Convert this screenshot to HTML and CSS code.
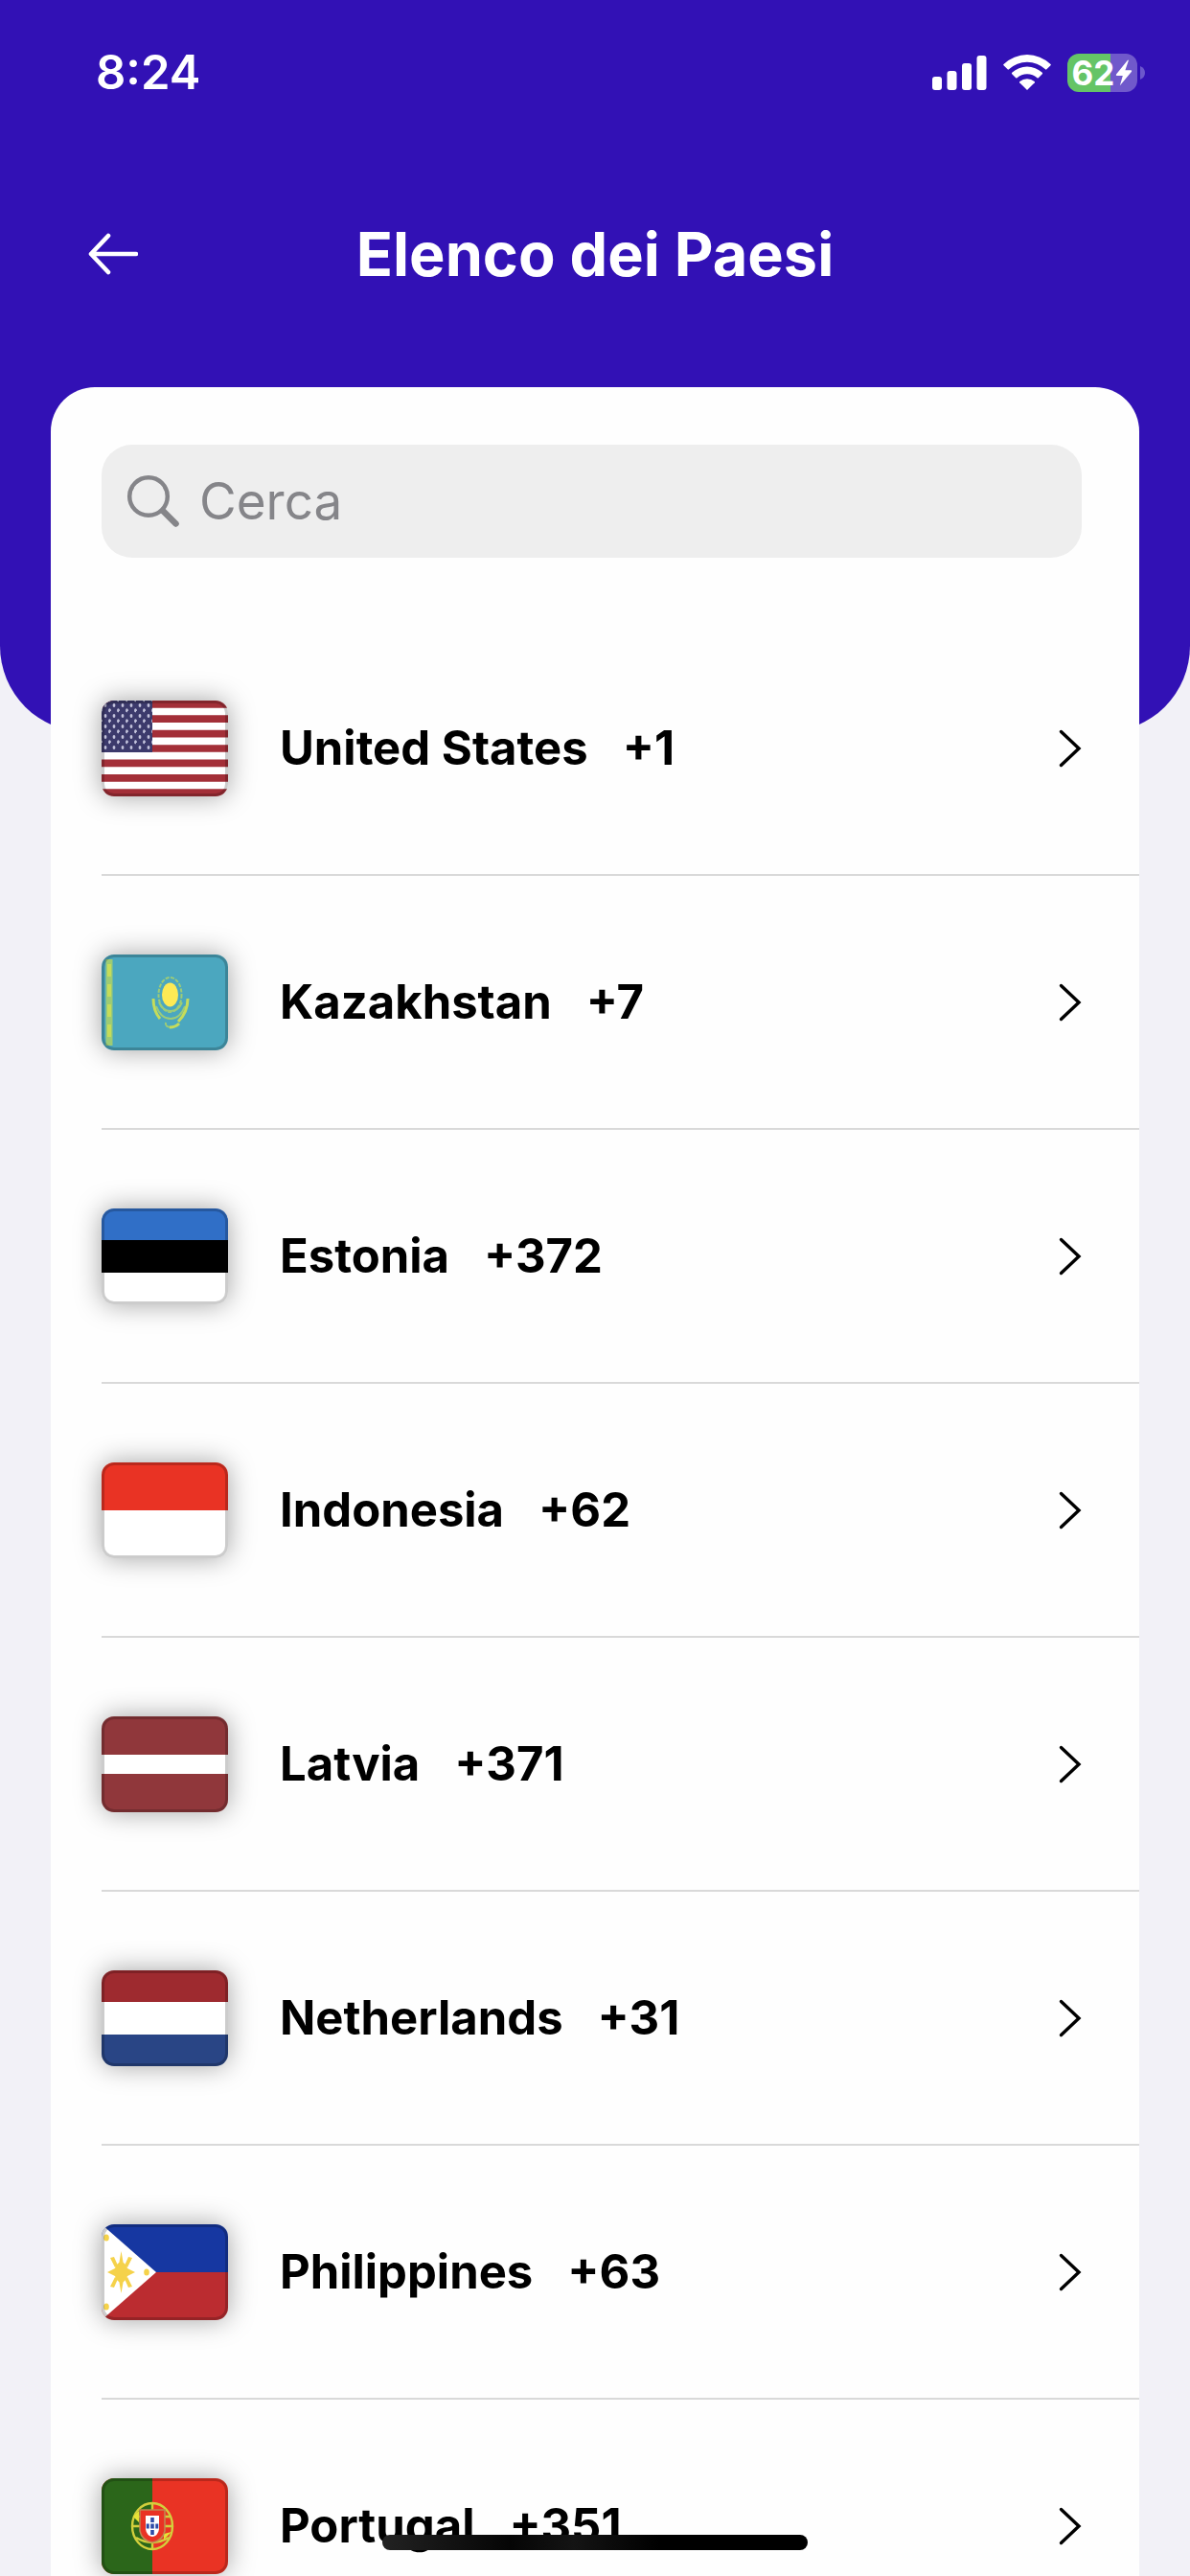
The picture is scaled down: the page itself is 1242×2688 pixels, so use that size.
FILE: index.html
```html
<!DOCTYPE html>
<html lang="it">
<head>
<meta charset="utf-8">
<meta name="viewport" content="width=device-width, initial-scale=1">
<title>Elenco dei Paesi</title>
<link rel="stylesheet" href="styles.css">
</head>
<body>
<svg width="0" height="0" class="defs" aria-hidden="true">
  <defs>
    <pattern id="stars" width="9" height="11" patternUnits="userSpaceOnUse">
      <ellipse cx="4" cy="5" rx="1.4" ry="2" fill="#c3c3dc"/>
      <ellipse cx="8.5" cy="10.3" rx="1.4" ry="2" fill="#c3c3dc"/>
      <ellipse cx="-.5" cy="10.3" rx="1.4" ry="2" fill="#c3c3dc"/>
      <ellipse cx="8.5" cy="-.7" rx="1.4" ry="2" fill="#c3c3dc"/>
    </pattern>
    <symbol id="chevron" viewBox="0 0 24 40">
      <path d="M2.500 2.500 21 20 2.500 37.500" fill="none" stroke="#000" stroke-width="3.400" stroke-linecap="round" stroke-linejoin="miter"/>
    </symbol>
  </defs>
</svg>
<div class="app">
  <header class="top">
    <div class="status">
      <time class="clock">8:24</time>
      <div class="indicators">
        <svg class="signal" viewBox="0 0 57 40" aria-hidden="true">
          <g fill="#fff"><rect y="24" width="10" height="14" rx="3"/><rect x="15.500" y="18" width="10" height="20" rx="3"/><rect x="31" y="10" width="10" height="28" rx="3"/><rect x="46.500" y="2" width="10" height="36" rx="3"/></g>
        </svg>
        <svg class="wifi" viewBox="0 0 50 40" aria-hidden="true">
          <g fill="#fff"><path d="M25 38 17.200 30.200A1 1 0 0 1 17.300 29 12.500 12.500 0 0 1 32.700 29 1 1 0 0 1 32.800 30.200Z"/><path d="M9.200 21.200A1 1 0 0 1 9.200 19.800 23 23 0 0 1 40.800 19.800 1 1 0 0 1 40.800 21.200L36.800 25.200A1 1 0 0 1 35.500 25.200 15.800 15.800 0 0 0 14.500 25.200 1 1 0 0 1 13.200 25.200Z"/><path d="M.5 12.300A1 1 0 0 1 .5 10.900 35.500 35.500 0 0 1 49.500 10.900 1 1 0 0 1 49.500 12.300L45.400 16.300A1 1 0 0 1 44 16.300 27.800 27.800 0 0 0 6 16.300 1 1 0 0 1 4.600 16.300Z"/></g>
        </svg>
        <div class="battery">
          <span class="charge">62<svg class="bolt" viewBox="0 0 18 28" aria-hidden="true"><path d="M13 .8 1 15.500Q.3 16.800 1.600 16.900H7.800L4.900 27.200 17 12.800Q17.700 11.500 16.400 11.300H10.400L13.800 1.200Q13.600.3 13 .8Z" fill="#fff"/></svg></span>
          <svg class="nub" viewBox="0 0 5 14" aria-hidden="true"><path d="M0 0Q5 2 5 7T0 14Z" fill="#6c57cc"/></svg>
        </div>
      </div>
    </div>
    <div class="nav">
      <button class="back" type="button" aria-label="Indietro">
        <svg viewBox="0 0 52 44" aria-hidden="true"><path d="M50 22H3M21 3 3 22 21 41" fill="none" stroke="#fff" stroke-width="4.600" stroke-linecap="round" stroke-linejoin="round"/></svg>
      </button>
      <h1 class="title">Elenco dei Paesi</h1>
    </div>
  </header>

  <main class="card">
    <label class="search">
      <svg class="lens" viewBox="0 0 56 56" aria-hidden="true"><g fill="none" stroke="#858589"><circle cx="23" cy="23" r="19.800" stroke-width="4.500"/><path d="M38 38 51.500 51.500" stroke-width="6.500" stroke-linecap="round"/></g></svg>
      <input type="search" placeholder="Cerca" aria-label="Cerca">
    </label>

    <ul class="list">
      <li><a class="row" href="#us">
        <svg class="flag" viewBox="0 0 132 100" aria-hidden="true">
          <path fill="#fff" d="M0 0h132v100H0z"/>
          <path stroke="#a32f38" stroke-width="7.700" d="M0 3.850h132M0 19.200h132M0 34.600h132M0 50h132M0 65.400h132M0 80.800h132M0 96.150h132"/>
          <path fill="#3c3a6c" d="M0 0h53v54H0z"/><path fill="url(#stars)" d="M0 0h53v52H0z"/>
          <rect class="rim" width="132" height="100" rx="13"/>
        </svg>
        <span class="name">United States</span><span class="code">+1</span>
        <svg class="chevron" aria-hidden="true"><use href="#chevron"/></svg>
      </a></li>
      <li><a class="row" href="#kz">
        <svg class="flag" viewBox="0 0 132 100" aria-hidden="true">
          <path fill="#4ba7bf" d="M0 0h132v100H0z"/>
          <path stroke="#9dcb74" stroke-width="7" d="M8 5v90"/><path stroke="#c5dc5a" stroke-width="4" stroke-dasharray="13 8" d="M8 10v82"/>
          <g fill="none" stroke="#9ccc78" stroke-width="2"><ellipse cx="71.500" cy="42" rx="12" ry="18" stroke-dasharray="4 1.500"/><path d="M60 50q4 9 12 9t12-9M57 54q5 13 15 13t15-13"/><path d="M67 71q-1 5 6 5"/></g>
          <g fill="none" stroke="#c5dc5a" stroke-width="3"><path d="M54 46q0 13 7 21M90 46q0 14-10 24M71 76q6 0 10-4"/></g>
          <ellipse cx="71.500" cy="42" rx="8.500" ry="12.500" fill="#fdea55"/>
          <rect class="rim" width="132" height="100" rx="13"/>
        </svg>
        <span class="name">Kazakhstan</span><span class="code">+7</span>
        <svg class="chevron" aria-hidden="true"><use href="#chevron"/></svg>
      </a></li>
      <li><a class="row" href="#ee">
        <svg class="flag" viewBox="0 0 132 100" aria-hidden="true">
          <path fill="#fff" d="M0 0h132v100H0z"/><path fill="#306fc7" d="M0 0h132v33H0z"/><path d="M0 33h132v34H0z"/>
          <rect class="rim" width="132" height="100" rx="13"/>
        </svg>
        <span class="name">Estonia</span><span class="code">+372</span>
        <svg class="chevron" aria-hidden="true"><use href="#chevron"/></svg>
      </a></li>
      <li><a class="row" href="#id">
        <svg class="flag" viewBox="0 0 132 100" aria-hidden="true">
          <path fill="#fff" d="M0 0h132v100H0z"/><path fill="#e93324" d="M0 0h132v50H0z"/>
          <rect class="rim" width="132" height="100" rx="13"/>
        </svg>
        <span class="name">Indonesia</span><span class="code">+62</span>
        <svg class="chevron" aria-hidden="true"><use href="#chevron"/></svg>
      </a></li>
      <li><a class="row" href="#lv">
        <svg class="flag" viewBox="0 0 132 100" aria-hidden="true">
          <path fill="#90373b" d="M0 0h132v100H0z"/><path fill="#fff" d="M0 40h132v20H0z"/>
          <rect class="rim" width="132" height="100" rx="13"/>
        </svg>
        <span class="name">Latvia</span><span class="code">+371</span>
        <svg class="chevron" aria-hidden="true"><use href="#chevron"/></svg>
      </a></li>
      <li><a class="row" href="#nl">
        <svg class="flag" viewBox="0 0 132 100" aria-hidden="true">
          <path fill="#fff" d="M0 0h132v100H0z"/><path fill="#9e2a2f" d="M0 0h132v33H0z"/><path fill="#294585" d="M0 67h132v33H0z"/>
          <rect class="rim" width="132" height="100" rx="13"/>
        </svg>
        <span class="name">Netherlands</span><span class="code">+31</span>
        <svg class="chevron" aria-hidden="true"><use href="#chevron"/></svg>
      </a></li>
      <li><a class="row" href="#ph">
        <svg class="flag" viewBox="0 0 132 100" aria-hidden="true">
          <path fill="#1637a1" d="M0 0h132v50H0z"/><path fill="#bb2c30" d="M0 50h132v50H0z"/><path fill="#fff" d="M0 0 57 50 0 100z"/>
          <g fill="#f5d24a"><ellipse cx="20.500" cy="50" rx="7" ry="10.500"/><path d="M20.500 28l2.500 14h-5zM20.500 72l2.500-14h-5zM6 50l8-4v8zM35 50l-8-4v8zM9 35l4-1 4 9-3 2zM32 35l-4-1-4 9 3 2zM9 65l4 1 4-9-3-2zM32 65l-4 1-4-9 3-2z"/><ellipse cx="47" cy="50" rx="2.800" ry="3.500"/><ellipse cx="5" cy="14" rx="2.800" ry="3.500"/><ellipse cx="5" cy="86" rx="2.800" ry="3.500"/></g>
          <rect class="rim" width="132" height="100" rx="13"/>
        </svg>
        <span class="name">Philippines</span><span class="code">+63</span>
        <svg class="chevron" aria-hidden="true"><use href="#chevron"/></svg>
      </a></li>
      <li><a class="row" href="#pt">
        <svg class="flag" viewBox="0 0 132 100" aria-hidden="true">
          <path fill="#e93324" d="M0 0h132v100H0z"/><path fill="#2b661a" d="M0 0h53v100H0z"/>
          <g fill="none" stroke="#d3cf3c" stroke-width="2.400"><ellipse cx="53" cy="50" rx="21" ry="24"/><path d="M53 26v8M32 50h8M66 50h8M34 40h38M36 62q17 10 34 0M53 66v8"/></g>
          <path fill="#e6e236" d="M33 40l6-6v12zM73 56l-8 8v-6z"/>
          <path fill="#e93324" stroke="#c08a52" stroke-width="1.500" d="M40 33h26v22q-2 10-13 12-11-2-13-12z"/>
          <path fill="#fff" d="M46 39h14v14q-1 7-7 8-6-1-7-8z"/>
          <path fill="#2d4ca8" d="M51.200 41h3.600v5h-3.600zM51.200 47.500h3.600v5h-3.600zM51.200 54h3.600v5h-3.600zM46.700 47.500h3v5h-3zM56.300 47.500h3v5h-3z"/>
          <rect class="rim" width="132" height="100" rx="13"/>
        </svg>
        <span class="name">Portugal</span><span class="code">+351</span>
        <svg class="chevron" aria-hidden="true"><use href="#chevron"/></svg>
      </a></li>
    </ul>
  </main>
  <div class="home-bar"></div>
</div>
</body>
</html>
```
FILE: styles.css
```css
* { box-sizing: border-box; }

body {
  margin: 0;
  background: #f2f1f7;
  color: #000;
  font-family: Inter, "Liberation Sans", sans-serif;
}

.defs { position: absolute; }

.app {
  display: flex;
  flex-direction: column;
  height: 100vh;
  overflow: hidden;
}

/* blue header that runs on behind the card */
.top {
  flex: none;
  padding-bottom: 360px;
  background: #3211b5;
  border-radius: 0 0 90px 90px;
  color: #fff;
}

.status {
  display: flex;
  align-items: center;
  justify-content: space-between;
  height: 152px;
  padding: 0 47px 0 100px;
}

.clock { font-size: 49px; font-weight: 600; line-height: 60px; }

.indicators { display: flex; align-items: center; gap: 17px; }
.signal { width: 57px; height: 40px; }
.wifi { width: 50px; height: 40px; }

.battery { display: flex; align-items: center; gap: 3px; }
.charge {
  display: flex;
  align-items: center;
  justify-content: center;
  gap: 1px;
  width: 73px;
  height: 40px;
  border-radius: 12px;
  background: linear-gradient(90deg, #65c466 62%, #7059cb 62%);
  font-size: 35px;
  font-weight: 700;
  line-height: 40px;
}
.bolt { width: 18px; height: 28px; }
.nub { width: 5px; height: 14px; }

.nav {
  display: grid;
  grid-template-columns: 96px 1fr 96px;
  align-items: center;
  height: 252px;
  padding: 0 72px 26px;
}
.back {
  display: flex;
  padding: 20px;
  border: 0;
  background: none;
}
.back svg { width: 52px; height: 44px; }
.title {
  margin: 0;
  font-size: 63px;
  font-weight: 700;
  line-height: 80px;
  text-align: center;
}

.card {
  display: flex;
  flex: 1;
  flex-direction: column;
  min-height: 0;
  margin: -360px 53px 0;
  background: #fefefe;
  border-radius: 46px 46px 0 0;
}

.search {
  display: flex;
  flex: none;
  align-items: center;
  gap: 20px;
  height: 118px;
  margin: 60px 60px 67px 53px;
  padding: 0 26px;
  background: #eee;
  border-radius: 32px;
}
.lens { flex: none; width: 56px; height: 56px; }
.search input {
  flex: 1;
  min-width: 0;
  padding: 0;
  border: 0;
  outline: 0;
  background: none;
  color: #000;
  font: 400 53px/72px Inter, "Liberation Sans", sans-serif;
}
.search input::placeholder { color: #858589; opacity: 1; }

/* starts at the card's edge so that the flag shadows are not clipped */
.list {
  flex: 1;
  min-height: 0;
  margin: 0;
  padding: 0 0 0 53px;
  overflow-y: auto;
  scrollbar-width: none;
  list-style: none;
}

.row {
  display: flex;
  align-items: center;
  height: 265px;
  padding-right: 60px;
  border-bottom: 2px solid #d9d9d9;
  color: inherit;
  font-size: 49px;
  font-weight: 700;
  line-height: 60px;
  text-decoration: none;
}
.flag {
  flex: none;
  width: 132px;
  height: 100px;
  border-radius: 13px;
  box-shadow: 0 0 28px rgba(0, 0, 0, .36);
}
.rim { fill: none; stroke: rgba(0, 0, 0, .2); stroke-width: 6; }
.name { margin-left: 54px; }
.code { margin-left: 36px; }
.chevron { flex: none; width: 24px; height: 40px; margin-left: auto; }

.home-bar {
  position: fixed;
  bottom: 27px;
  left: 50%;
  width: 444px;
  height: 16px;
  margin-left: -222px;
  border-radius: 8px;
  background: linear-gradient(90deg, #222, #050505 30%, #141414 45%, #000 65%);
}
```
